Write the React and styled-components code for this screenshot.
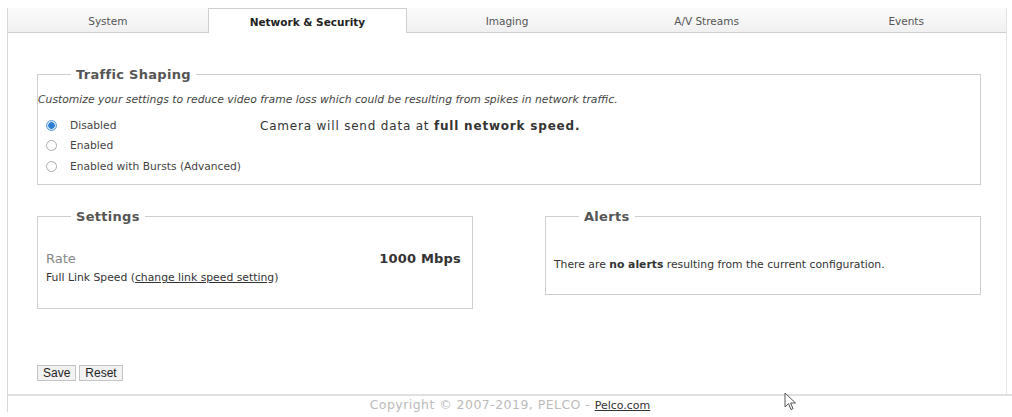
import styled, { createGlobalStyle } from 'styled-components';

const GlobalStyle = createGlobalStyle`
  body {
    margin: 0;
    background: #fff;
    font-family: "DejaVu Sans", Verdana, sans-serif;
    color: #333;
  }
`;

const Page = styled.div`
  position: relative;
  width: 1012px;
  height: 417px;
  overflow: hidden;
`;

const Frame = styled.div`
  margin: 8px 0 0 7px;
  width: 998px;
  border-left: 1px solid #d8d8d8;
  border-right: 1px solid #e4e4e4;
`;

const TabBar = styled.div`
  display: flex;
  height: 24px;
  border-bottom: 1px solid #cfcfcf;
  background: linear-gradient(#fbfbfb, #f0f0f0);
`;

const Tab = styled.div`
  flex: 1;
  display: flex;
  align-items: center;
  justify-content: center;
  padding-top: 1px;
  font-size: 10.5px;
  color: ${(p) => (p.$active ? '#222' : '#555')};
  font-weight: ${(p) => (p.$active ? 'bold' : 'normal')};
  background: ${(p) => (p.$active ? '#fff' : 'transparent')};
  border: 1px solid ${(p) => (p.$active ? '#cfcfcf' : 'transparent')};
  border-bottom: none;
  margin-bottom: ${(p) => (p.$active ? '-1px' : '0')};
  & + & {
    box-shadow: ${(p) => (p.$active ? 'none' : 'inset 1px 0 0 #e6e6e6')};
  }
`;

const Content = styled.div`
  padding: 34px 25px 13px 29px;
`;

const Box = styled.fieldset`
  margin: 0;
  padding: 0;
  border: 1px solid #cfcfcf;
  min-width: 0;
  box-sizing: border-box;
  height: ${(p) => p.$height};
`;

const Legend = styled.legend`
  margin-left: 33px;
  padding: 0 5px;
  font-size: 13px;
  letter-spacing: 0.3px;
  font-weight: bold;
  color: #555;
`;

const Body = styled.div`
  padding: 0 8px;
`;

const Note = styled.p`
  margin: 11px 0 8px 0;
  line-height: 14px;
  font-size: 10.8px;
  font-style: italic;
  color: #444;
`;

const ModeRow = styled.div`
  display: flex;
  padding-left: 8px;
`;

const RadioList = styled.div`
  display: flex;
  flex-direction: column;
  width: 214px;
`;

const RadioLabel = styled.label`
  display: flex;
  align-items: center;
  height: 20.5px;
  font-size: 10.7px;
  color: #444;
`;

const Radio = styled.span`
  flex: none;
  width: 9px;
  height: 9px;
  border-radius: 50%;
  border: 1px solid ${(p) => (p.$on ? '#5a9ad6' : '#aaa')};
  background: ${(p) => (p.$on ? 'radial-gradient(circle, #2a7fd4 0 3px, #cfe3f6 3.5px)' : '#fff')};
  margin-right: 13px;
`;

const Status = styled.div`
  line-height: 20.5px;
  padding-top: 1px;
  font-size: 12px;
  letter-spacing: 0.8px;
  color: #333;
`;

const Columns = styled.div`
  display: flex;
  align-items: flex-start;
  gap: 72px;
  margin-top: 24px;
`;

const Half = styled.div`
  width: 436px;
`;

const RateRow = styled.div`
  display: flex;
  justify-content: space-between;
  align-items: center;
  margin-top: 27px;
  padding-right: 3px;
`;

const RateLabel = styled.span`
  font-size: 13px;
  color: #888;
`;

const RateValue = styled.span`
  font-size: 13px;
  font-weight: bold;
  letter-spacing: 0.2px;
  color: #333;
`;

const Small = styled.div`
  margin-top: ${(p) => p.$top || '5px'};
  font-size: 10.8px;
  color: #333;
`;

const Link = styled.a`
  color: #333;
  text-decoration: underline;
`;

const Actions = styled.div`
  display: flex;
  gap: 3px;
  margin-top: 56px;
`;

const Button = styled.button`
  font-family: "Liberation Sans", Arial, sans-serif;
  font-size: 12px;
  color: #222;
  padding: 0 5px;
  height: 16px;
  line-height: 14px;
  background: #f2f2f2;
  border: 1px solid #c4c4c4;
  border-radius: 0;
`;

const Footer = styled.div`
  border-top: 2px solid #e0e0e0;
  margin-left: 7px;
  border-left: 1px solid #d8d8d8;
  padding-top: 1px;
  text-align: center;
  font-size: 12.5px;
  letter-spacing: 0.45px;
  color: #bbb;
`;

const FooterLink = styled.a`
  color: #333;
  font-size: 11px;
  letter-spacing: 0;
  text-decoration: underline;
`;

const Cursor = styled.svg`
  position: absolute;
  left: 784px;
  top: 392px;
`;

export default function App() {
  const tabs = ['System', 'Network & Security', 'Imaging', 'A/V Streams', 'Events'];
  return (
    <Page>
      <GlobalStyle />
      <Frame>
        <TabBar>
          {tabs.map((t) => (
            <Tab key={t} $active={t === 'Network & Security'}>
              {t}
            </Tab>
          ))}
        </TabBar>
        <Content>
          <Box $height="118px">
            <Legend>Traffic Shaping</Legend>
            <Note>
              Customize your settings to reduce video frame loss which could be resulting from
              spikes in network traffic.
            </Note>
            <ModeRow>
              <RadioList>
                <RadioLabel>
                  <Radio $on />
                  Disabled
                </RadioLabel>
                <RadioLabel>
                  <Radio />
                  Enabled
                </RadioLabel>
                <RadioLabel>
                  <Radio />
                  Enabled with Bursts (Advanced)
                </RadioLabel>
              </RadioList>
              <Status>
                Camera will send data at <b>full network speed.</b>
              </Status>
            </ModeRow>
          </Box>
          <Columns>
            <Half>
              <Box $height="100px">
                <Legend>Settings</Legend>
                <Body>
                  <RateRow>
                    <RateLabel>Rate</RateLabel>
                    <RateValue>1000 Mbps</RateValue>
                  </RateRow>
                  <Small>
                    Full Link Speed (<Link>change link speed setting</Link>)
                  </Small>
                </Body>
              </Box>
            </Half>
            <Half>
              <Box $height="86px">
                <Legend>Alerts</Legend>
                <Body>
                  <Small $top="34px">
                    There are <b>no alerts</b> resulting from the current configuration.
                  </Small>
                </Body>
              </Box>
            </Half>
          </Columns>
          <Actions>
            <Button>Save</Button>
            <Button>Reset</Button>
          </Actions>
        </Content>
      </Frame>
      <Footer>
        Copyright © 2007-2019, PELCO - <FooterLink>Pelco.com</FooterLink>
      </Footer>
      <Cursor width="14" height="20" viewBox="0 0 14 20">
        <path d="M1 1 L1 15 L4.5 11.5 L7 17.5 L9 16.6 L6.6 11 L11.5 11 Z" fill="#fff" stroke="#555" strokeWidth="1" />
      </Cursor>
    </Page>
  );
}
